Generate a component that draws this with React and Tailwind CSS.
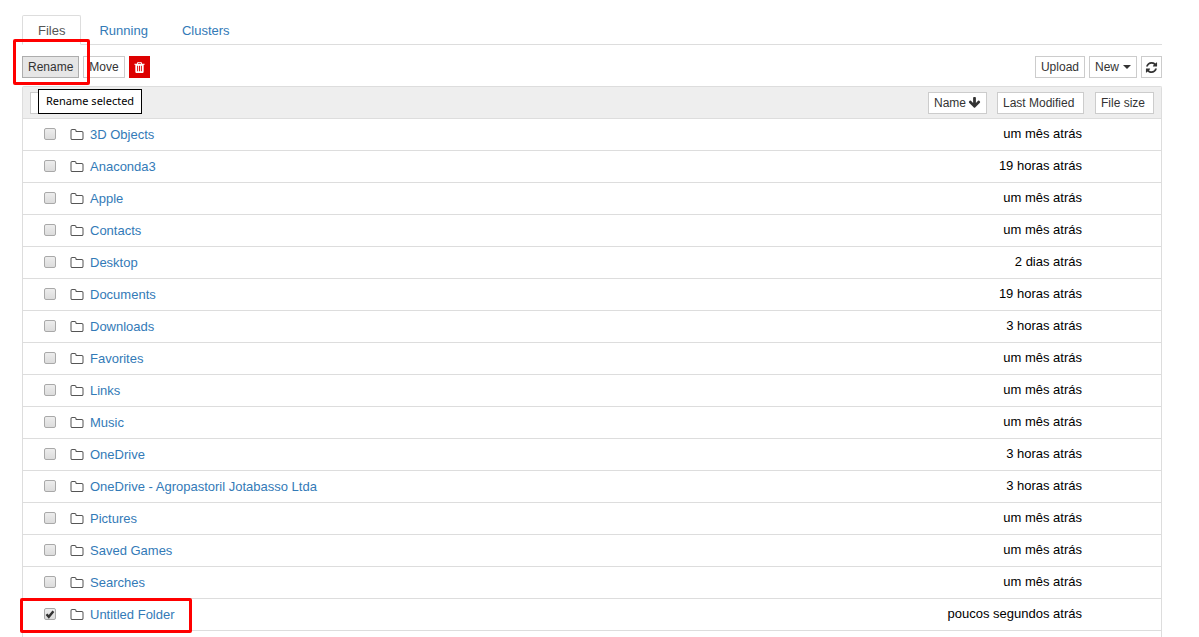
import React, { useState } from 'react';

const folders = [
  { name: '3D Objects', modified: 'um mês atrás' },
  { name: 'Anaconda3', modified: '19 horas atrás' },
  { name: 'Apple', modified: 'um mês atrás' },
  { name: 'Contacts', modified: 'um mês atrás' },
  { name: 'Desktop', modified: '2 dias atrás' },
  { name: 'Documents', modified: '19 horas atrás' },
  { name: 'Downloads', modified: '3 horas atrás' },
  { name: 'Favorites', modified: 'um mês atrás' },
  { name: 'Links', modified: 'um mês atrás' },
  { name: 'Music', modified: 'um mês atrás' },
  { name: 'OneDrive', modified: '3 horas atrás' },
  { name: 'OneDrive - Agropastoril Jotabasso Ltda', modified: '3 horas atrás' },
  { name: 'Pictures', modified: 'um mês atrás' },
  { name: 'Saved Games', modified: 'um mês atrás' },
  { name: 'Searches', modified: 'um mês atrás' },
  { name: 'Untitled Folder', modified: 'poucos segundos atrás', highlighted: true }
];

const icons = {
  folder:
    'M1600 1312v-704q0-40-28-68t-68-28h-704q-40 0-68-28t-28-68v-64q0-40-28-68t-68-28h-320q-40 0-68 28t-28 68v960q0 40 28 68t68 28h1216q40 0 68-28t28-68zm128-704v704q0 92-66 158t-158 66h-1216q-92 0-158-66t-66-158v-960q0-92 66-158t158-66h320q92 0 158 66t66 158v32h672q92 0 158 66t66 158z',
  trash:
    'M704 1376v-704q0-14-9-23t-23-9h-64q-14 0-23 9t-9 23v704q0 14 9 23t23 9h64q14 0 23-9t9-23zm256 0v-704q0-14-9-23t-23-9h-64q-14 0-23 9t-9 23v704q0 14 9 23t23 9h64q14 0 23-9t9-23zm256 0v-704q0-14-9-23t-23-9h-64q-14 0-23 9t-9 23v704q0 14 9 23t23 9h64q14 0 23-9t9-23zm-544-992h448l-48-117q-7-9-17-11h-317q-10 2-17 11zm928 32v64q0 14-9 23t-23 9h-96v948q0 83-47 143.5t-113 60.5h-832q-66 0-113-58.5t-47-141.5v-952h-96q-14 0-23-9t-9-23v-64q0-14 9-23t23-9h309l70-167q15-37 54-63t79-26h320q40 0 79 26t54 63l70 167h309q14 0 23 9t9 23z',
  refresh:
    'M1639 1056q0 5-1 7-64 268-268 434.5t-478 166.5q-146 0-282.5-55t-243.5-157l-129 129q-19 19-45 19t-45-19-19-45v-448q0-26 19-45t45-19h448q26 0 45 19t19 45-19 45l-137 137q71 66 161 102t187 36q134 0 250-65t186-179q11-17 53-117 8-23 30-23h192q13 0 22.5 9.5t9.5 22.5zm25-800v448q0 26-19 45t-45 19h-448q-26 0-45-19t-19-45 19-45l138-138q-148-137-349-137-134 0-250 65t-186 179q-11 17-53 117-8 23-30 23h-199q-13 0-22.5-9.5t-9.5-22.5v-7q65-268 270-434.5t480-166.5q146 0 284 55.5t245 156.5l130-129q19-19 45-19t45 19 19 45z',
  arrowDown:
    'M1675 832q0 53-37 90l-651 652q-39 37-91 37-53 0-90-37l-651-652q-38-36-38-90 0-53 38-91l74-75q39-37 91-37 53 0 90 37l294 294v-704q0-52 38-90t90-38h128q52 0 90 38t38 90v704l294-294q37-37 90-37 52 0 91 37l75 75q37 39 37 91z'
};

const Icon = ({ name, className }) => (
  <svg viewBox="0 0 1792 1792" fill="currentColor" aria-hidden="true" className={className}>
    <path d={icons[name]} />
  </svg>
);

const Button = ({ className = 'border-[#ccc] bg-white px-[5px] text-[#333]', children, ...props }) => (
  <button
    type="button"
    className={`flex h-[22px] items-center whitespace-nowrap border text-xs ${className}`}
    {...props}
  >
    {children}
  </button>
);

const Checkbox = ({ label, checked, onChange }) => (
  <span className="relative mb-0.5 flex size-3">
    <input
      type="checkbox"
      aria-label={label}
      checked={checked}
      onChange={onChange}
      className="size-3 appearance-none rounded-xs border border-[#a9a9a9] bg-linear-to-b from-[#ededed] to-[#dcdcdc]"
    />
    {checked && (
      <svg viewBox="0 0 12 12" className="pointer-events-none absolute inset-0 size-3">
        <path d="M2.5 6.2l2.3 2.6 4.6-5.6" fill="none" stroke="#333" strokeWidth="2.4" />
      </svg>
    )}
  </span>
);

const Tabs = () => (
  <nav className="flex border-b border-[#ddd] text-[13px] leading-[18px]">
    <a href="#files" className="-mb-px rounded-t-xs border border-[#ddd] border-b-white bg-white px-[15px] pt-[6px] pb-1 text-[#555]">
      Files
    </a>
    <a href="#running" className="ml-[2px] px-4 pt-[7px] text-[#337ab7]">Running</a>
    <a href="#clusters" className="ml-[2px] px-4 pt-[7px] text-[#337ab7]">Clusters</a>
  </nav>
);

const Toolbar = () => (
  <div className="flex items-center justify-between pt-[11px] pb-2">
    <div className="flex gap-1">
      <div className="relative">
        <Button className="border-[#adadad] bg-[#e6e6e6] px-[5px] text-[#333]" aria-describedby="rename-tip">
          Rename
        </Button>
        <div className="pointer-events-none absolute -top-[17px] -left-[9px] z-10 h-[46px] w-[77px] rounded-xs border-3 border-[#f00]" />
        <div
          id="rename-tip"
          role="tooltip"
          className="absolute top-[33px] left-4 z-20 flex h-[25px] items-center whitespace-nowrap border border-black bg-white px-[7px] font-['Noto_Sans',sans-serif] text-[11px] text-black"
        >
          Rename selected
        </div>
      </div>
      <Button>Move</Button>
      <Button className="border-[#d00] bg-[#d00] px-[3px] text-white" aria-label="Delete selected">
        <Icon name="trash" className="size-[13px]" />
      </Button>
    </div>
    <div className="flex gap-1">
      <Button>Upload</Button>
      <Button aria-haspopup="menu">
        New
        <span className="ml-1 border-x-4 border-t-4 border-x-transparent border-t-[#333]" />
      </Button>
      <Button className="border-[#ccc] bg-white px-[3px] text-[#333]" aria-label="Refresh">
        <Icon name="refresh" className="size-[13px]" />
      </Button>
    </div>
  </div>
);

const FileRow = ({ folder, checked, onToggle }) => (
  <tr className="h-8">
    <td className="border-b border-[#ddd] p-0">
      <div className="relative flex items-center pl-[21px]">
        <Checkbox label={`Select ${folder.name}`} checked={checked} onChange={onToggle} />
        <Icon name="folder" className="ml-[14px] size-[14px] text-[#555]" />
        <a href="#folder" className="ml-[6px] leading-[18px] text-[#337ab7]">{folder.name}</a>
        {folder.highlighted && (
          <div className="pointer-events-none absolute -top-2 -left-[3px] z-10 h-[35px] w-[172px] rounded-xs border-3 border-[#f00]" />
        )}
      </div>
    </td>
    <td colSpan={2} className="border-b border-[#ddd] p-0 pr-[2px] pb-[2px] text-right leading-[18px] text-black">
      {folder.modified}
    </td>
    <td className="border-b border-[#ddd] p-0" />
  </tr>
);

export default function App() {
  const [selected, setSelected] = useState(['Untitled Folder']);

  const toggle = (name) =>
    setSelected((prev) => (prev.includes(name) ? prev.filter((n) => n !== name) : [...prev, name]));

  return (
    <div className="flex min-h-screen flex-col bg-white pt-[15px] pr-[37px] pl-[22px] font-['Liberation_Sans',Arial,sans-serif]">
      <Tabs />
      <Toolbar />
      <div className="flex-1 rounded-t-xs border border-b-0 border-[#ddd]">
        <table className="w-full border-separate border-spacing-0 text-[13px]">
          <thead className="bg-[#eee]">
            <tr className="h-8">
              <th className="border-b border-[#ddd] p-0 pl-[7px]">
                <Button aria-label="Select">
                  <span className="w-10" />
                </Button>
              </th>
              <th className="w-[69px] border-b border-[#ddd] p-0 font-normal">
                <Button>
                  Name
                  <Icon name="arrowDown" className="ml-[2px] size-[13px]" />
                </Button>
              </th>
              <th className="w-[87px] border-b border-[#ddd] p-0 font-normal">
                <Button className="w-full border-[#ccc] bg-white px-[5px] text-[#333]">Last Modified</Button>
              </th>
              <th className="w-[77px] border-b border-[#ddd] p-0 pr-[7px] pl-[11px] font-normal">
                <Button className="w-full border-[#ccc] bg-white px-[5px] text-[#333]">File size</Button>
              </th>
            </tr>
          </thead>
          <tbody>
            {folders.map((folder) => (
              <FileRow
                key={folder.name}
                folder={folder}
                checked={selected.includes(folder.name)}
                onToggle={() => toggle(folder.name)}
              />
            ))}
          </tbody>
        </table>
      </div>
    </div>
  );
}
